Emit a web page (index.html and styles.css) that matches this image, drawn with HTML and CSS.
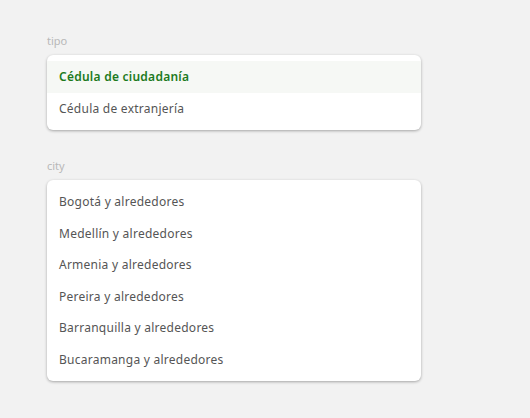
FILE: index.html
```html
<!DOCTYPE html>
<html>
<head>
<meta charset="utf-8">
<link rel="stylesheet" href="styles.css">
</head>
<body>
<div class="page">
  <div class="field">
    <div class="label">tipo</div>
    <ul class="menu">
      <li class="item active">Cédula de ciudadanía</li>
      <li class="item">Cédula de extranjería</li>
    </ul>
  </div>
  <div class="field">
    <div class="label">city</div>
    <ul class="menu">
      <li class="item">Bogotá y alrededores</li>
      <li class="item">Medellín y alrededores</li>
      <li class="item">Armenia y alrededores</li>
      <li class="item">Pereira y alrededores</li>
      <li class="item">Barranquilla y alrededores</li>
      <li class="item">Bucaramanga y alrededores</li>
    </ul>
  </div>
</div>
</body>
</html>
```
FILE: styles.css
```css
html, body {
  margin: 0;
  padding: 0;
  background: #f2f2f2;
  height: 100%;
}
body {
  font-family: "Noto Sans", "DejaVu Sans", sans-serif;
}
.page {
  padding: 34px 0 0 47px;
  display: flex;
  flex-direction: column;
  gap: 29px;
}
.field {
  width: 374px;
}
.label {
  font-size: 11px;
  color: #b8b8b8;
  line-height: 14px;
  height: 14px;
  margin-bottom: 7px;
}
.menu {
  list-style: none;
  margin: 0;
  padding: 6px 0 6px;
  background: #fff;
  border-radius: 6px;
  box-shadow: 0 1px 3px rgba(0,0,0,0.32);
}
.item {
  height: 31.5px;
  line-height: 31.5px;
  padding-left: 12px;
  font-size: 12px;
  color: #555;
  letter-spacing: 0.25px;
}
.item.active {
  background: #f6f8f5;
  color: #1d7a1d;
  font-weight: 600;
}
```
